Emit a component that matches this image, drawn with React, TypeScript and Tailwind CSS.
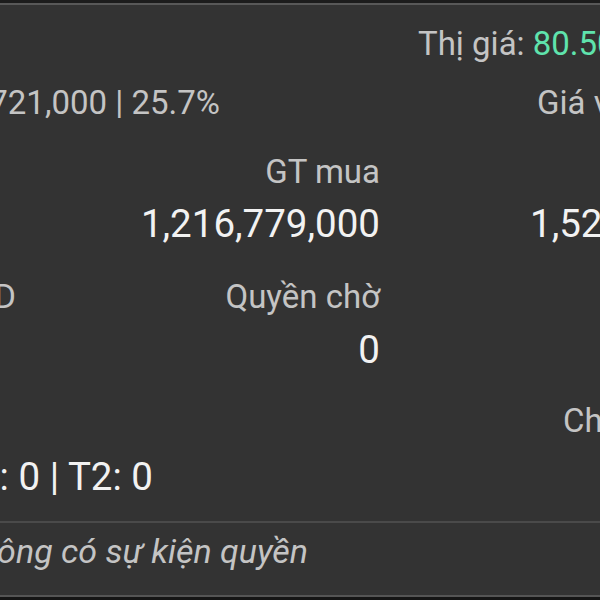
import React, { FC, ReactNode } from 'react';

const font = { fontFamily: 'Roboto, "Noto Sans", sans-serif' };

// ô nhãn: chữ xám, 33px
const Label: FC<{ children: ReactNode; className?: string }> = ({ children, className = '' }) => (
  <span className={`whitespace-nowrap text-[33px] leading-[40px] text-[#c4c4c4] ${className}`}>{children}</span>
);

// ô giá trị: chữ trắng
const Value: FC<{ children: ReactNode; className?: string }> = ({ children, className = '' }) => (
  <span className={`whitespace-nowrap text-[38.5px] leading-[44px] text-[#f2f2f2] ${className}`}>{children}</span>
);

// hộp căn phải, phần chữ tràn sẽ bị cắt về bên trái
const RightBox: FC<{ width: string; children: ReactNode }> = ({ width, children }) => (
  <div className={`flex shrink-0 justify-end ${width}`}>{children}</div>
);

const App: FC = () => {
  return (
    <div className="flex h-[600px] w-[600px] flex-col overflow-hidden bg-[#333333]" style={font}>
      <div className="h-[3px] shrink-0 bg-[#1c1c1c]" />
      <div className="h-[2px] shrink-0 bg-[#585858]" />

      {/* Thị giá */}
      <div className="mt-[19px] flex h-[40px] pl-[418px]">
        <Label>
          Thị giá: <span className="text-[#5fe3ad]">80.500</span>
        </Label>
      </div>

      {/* Lãi lỗ + giá vốn */}
      <div className="mt-[19px] flex h-[40px]">
        <RightBox width="w-[220px]">
          <Label className="text-[#5fe3ad]">+247,721,000 | 25.7%</Label>
        </RightBox>
        <Label className="ml-[317px]">Giá vốn: 64.050</Label>
      </div>

      <div className="mt-[29px] flex h-[40px]">
        <RightBox width="w-[380px]">
          <Label>GT mua</Label>
        </RightBox>
      </div>

      <div className="mt-[10px] flex h-[44px]">
        <RightBox width="w-[380px]">
          <Value>1,216,779,000</Value>
        </RightBox>
        <Value className="ml-[150px]">1,529,500,000</Value>
      </div>

      <div className="mt-[31px] flex h-[40px]">
        <RightBox width="w-[16px]">
          <Label>KL chờ GD</Label>
        </RightBox>
        <RightBox width="w-[364px]">
          <Label>Quyền chờ</Label>
        </RightBox>
      </div>

      <div className="mt-[11px] flex h-[44px]">
        <RightBox width="w-[380px]">
          <Value>0</Value>
        </RightBox>
      </div>

      <div className="mt-[29px] flex h-[40px] pl-[563px]">
        <Label>Chờ về</Label>
      </div>

      <div className="mt-[14px] flex h-[44px]">
        <RightBox width="w-[153px]">
          <Value>T0: 0 | T1: 0 | T2: 0</Value>
        </RightBox>
      </div>

      <div className="mt-[22px] h-[2px] shrink-0 bg-[#4a4a4a]" />

      <div className="mt-[8px] flex h-[40px]">
        <RightBox width="w-[308px]">
          <Label className="italic text-[34px]">Không có sự kiện quyền</Label>
        </RightBox>
      </div>

      <div className="mt-auto h-[2px] shrink-0 bg-[#555555]" />
      <div className="h-[3px] shrink-0 bg-[#151515]" />
    </div>
  );
};

export default App;
